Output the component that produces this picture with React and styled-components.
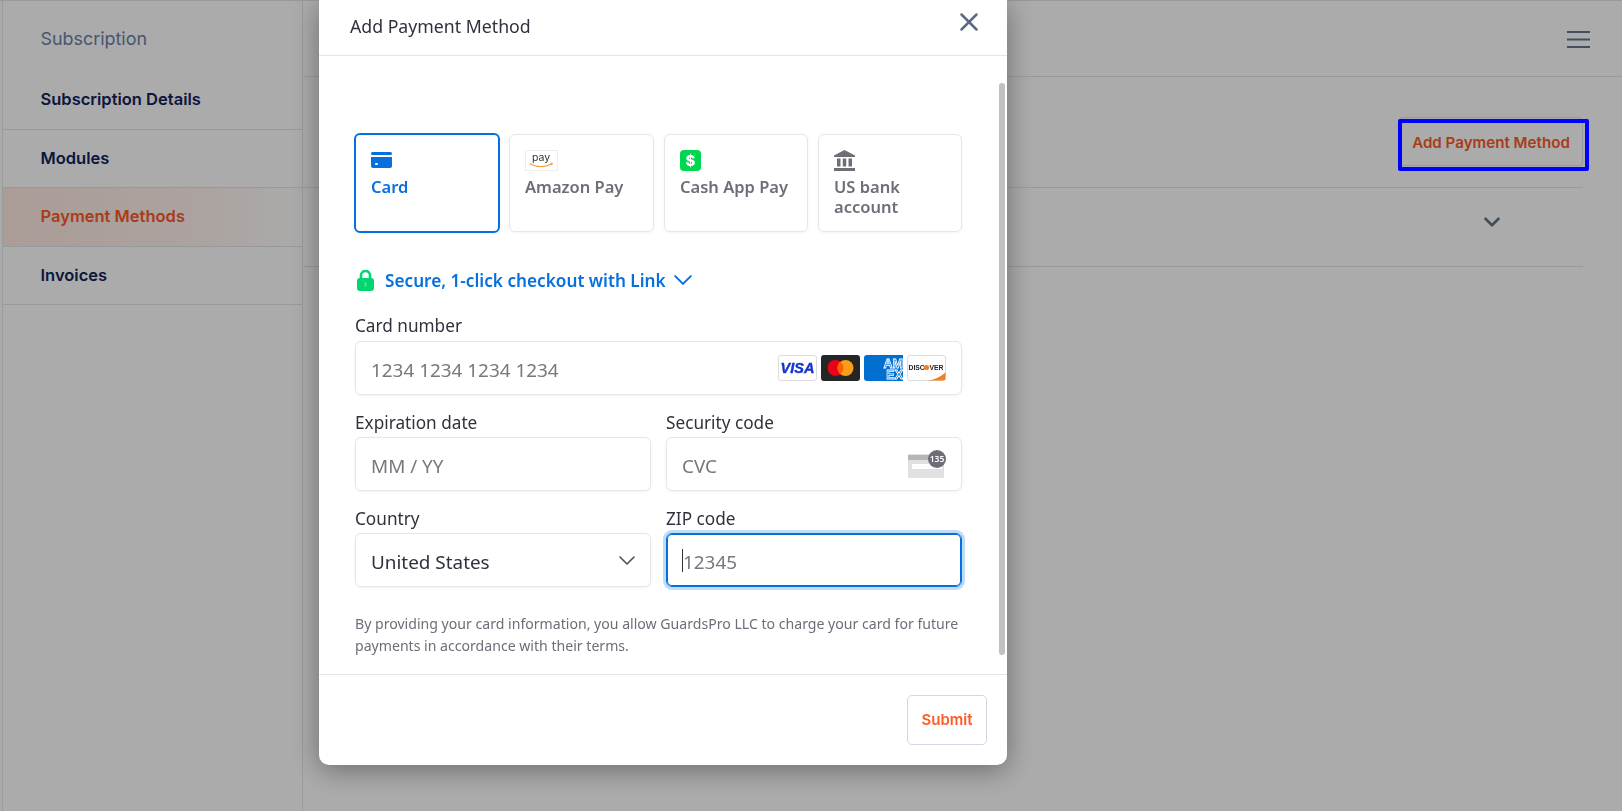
import React from 'react';
import styled, { createGlobalStyle } from 'styled-components';
import { X, ChevronDown } from 'lucide-react';

const Global = createGlobalStyle`
  html, body { margin: 0; padding: 0; height: 100%; overflow: hidden; background: #fff; }
  * { box-sizing: border-box; }
`;

const Page = styled.div`
  width: 1622px;
  height: 811px;
  display: flex;
  padding-left: 2px;
  border-top: 1px solid #dfe3ea;
  font-family: Inter, 'Liberation Sans', sans-serif;
  overflow: hidden;
`;

const Sidebar = styled.aside`
  width: 301px;
  flex-shrink: 0;
  border-left: 1px solid #e4e7ec;
  border-right: 1px solid #e4e7ec;
  display: flex;
  flex-direction: column;
`;

const SideTitle = styled.div`
  height: 69px;
  padding: 27px 0 0 37.5px;
  font-size: 17.9px;
  line-height: 22px;
  color: #6b7fa8;
`;

const SideItem = styled.div`
  height: ${(p) => p.$h}px;
  padding: 0 0 2px 37.5px;
  display: flex;
  align-items: center;
  font-size: 16.5px;
  font-weight: 600;
  border-bottom: 1px solid #e2e5ea;
  color: ${(p) => (p.$active ? '#fb5a26' : '#13235a')};
  background: ${(p) => (p.$active ? 'linear-gradient(90deg, #ffe9e1, #fff4f0 70%, #fff)' : 'transparent')};
`;

const Main = styled.main`
  flex: 1;
  display: flex;
  flex-direction: column;
`;

const TopBar = styled.div`
  height: 76px;
  flex-shrink: 0;
  border-bottom: 1px solid #e2e5ea;
  display: flex;
  justify-content: flex-end;
  align-items: flex-start;
  padding: 30px 32px 0 0;
  color: #64748b;
`;

const Content = styled.div`
  padding: 40px 39px 0 0;
  display: flex;
  flex-direction: column;
`;

const ActionRow = styled.div`
  display: flex;
  justify-content: flex-end;
  padding-bottom: 21px;
  border-bottom: 1px solid #e2e5ea;
`;

const OutlineButton = styled.button`
  width: 184px;
  height: 49px;
  padding: 1px 0 0;
  background: #fff;
  border: 1px solid #dfe3ea;
  border-radius: 4px;
  color: #fb5a26;
  font: 600 15.15px Inter, sans-serif;
`;

const AccordionRow = styled.div`
  height: 79px;
  border-bottom: 1px solid #e2e5ea;
  display: flex;
  justify-content: flex-end;
  padding: 21px 78px 0 0;
  color: #64748b;
`;

const Overlay = styled.div`
  position: fixed;
  inset: 0;
  background: rgba(0, 0, 0, 0.33);
  padding-left: 319px;
`;

// annotation drawn on top of the dimmed page, so it keeps its full colour
const Highlight = styled.div`
  position: fixed;
  left: 1398px;
  top: 119px;
  width: 191px;
  height: 52px;
  border: 4px solid #0000ff;
  border-radius: 2px;
`;

const Modal = styled.div`
  width: 688px;
  height: 765px;
  background: #fff;
  border-radius: 0 0 10px 10px;
  box-shadow: 0 5px 28px rgba(0, 0, 0, 0.38);
  display: flex;
  flex-direction: column;
  position: relative;
  font-family: 'Noto Sans', 'Open Sans', sans-serif;
`;

const ModalHeader = styled.div`
  height: 56px;
  flex-shrink: 0;
  border-bottom: 1px solid #e5e5e5;
  padding: 14px 0 0 31px;
  font-size: 17.7px;
  line-height: 24px;
  color: #30313d;
`;

const CloseBtn = styled.div`
  position: absolute;
  top: 7px;
  right: 23px;
  color: #5b6b84;
  display: flex;
`;

const ModalBody = styled.div`
  flex: 1;
  padding: 78px 45px 0 36px;
`;

const Thumb = styled.div`
  position: absolute;
  top: 83px;
  right: 2px;
  width: 6px;
  height: 572px;
  border-radius: 3px;
  background: #c1c1c1;
`;

const Tabs = styled.div`
  display: grid;
  grid-template-columns: 144px 145px 144px 144px;
  column-gap: 10px;
  align-items: start;
`;

const Tab = styled.div`
  height: ${(p) => (p.$active ? 100 : 98)}px;
  margin: ${(p) => (p.$active ? '-1px' : 0)};
  padding: 15px 0 0 15px;
  border-radius: 6px;
  border: ${(p) => (p.$active ? '2px solid #0570de' : '1px solid #e6e6e6')};
  box-shadow: 0 1px 3px rgba(0, 0, 0, 0.05);
  color: ${(p) => (p.$active ? '#0570de' : '#6d6e78')};
  font-size: 16.5px;
  font-weight: 600;
  line-height: 20px;
`;

const TabIcon = styled.div`
  height: 21px;
  margin-bottom: 6px;
  display: flex;
`;

const LinkRow = styled.div`
  display: flex;
  align-items: center;
  margin-top: 37px;
  height: 22px;
  color: #0570de;
  font-size: 17.2px;
  font-weight: 600;
  gap: 11px;
  padding-left: 2px;
`;

const LinkChevron = styled.span`
  display: flex;
  margin-left: -3px;
`;

const Label = styled.div`
  font-size: 17.2px;
  line-height: 24px;
  height: 24px;
  margin-bottom: 3px;
  padding-top: ${(p) => p.$nudge || 0}px;
  color: #30313d;
`;

const Field = styled.div`
  margin-top: ${(p) => p.$top || 0}px;
`;

const TwoCol = styled.div`
  display: grid;
  grid-template-columns: 296px 296px;
  gap: 15px;
  margin-top: 15px;
`;

const InputBox = styled.div`
  height: 54px;
  border-radius: 6px;
  border: ${(p) => (p.$focus ? '1px solid #0570de' : '1px solid #e6e6e6')};
  box-shadow: ${(p) =>
    p.$focus ? '0 0 0 3px rgba(5, 112, 222, 0.25), 0 0 0 1px #0570de inset' : '0 1px 3px rgba(0, 0, 0, 0.06)'};
  padding: 0 15px;
  display: flex;
  align-items: center;
  justify-content: space-between;
  font-size: 18.9px;
  color: ${(p) => (p.$value ? '#30313d' : '#77787f')};
`;

const InputText = styled.span`
  display: flex;
  align-items: center;
  margin-top: 4px;
`;

const Caret = styled.span`
  width: 1px;
  height: 23px;
  margin-top: -4px;
  background: #30313d;
`;

const Brands = styled.div`
  display: flex;
  gap: 4px;
`;

const Terms = styled.p`
  margin: 26px 0 0;
  font-size: 14.1px;
  line-height: 21.5px;
  white-space: nowrap;
  color: #6d6e78;
`;

const ModalFooter = styled.div`
  height: 91px;
  flex-shrink: 0;
  border-top: 1px solid #e5e5e5;
  display: flex;
  justify-content: flex-end;
  padding: 20px 20px 0 0;
`;

const SubmitBtn = styled.button`
  width: 80px;
  height: 50px;
  padding: 0 0 2px;
  background: #fff;
  border: 1px solid #cfd8e3;
  border-radius: 5px;
  color: #ff5a26;
  font: 600 15px Inter, sans-serif;
`;

const CardGlyph = () => (
  <svg width="21" height="17" viewBox="0 0 21 17" style={{ marginTop: 2 }}>
    <rect x="0" y="0" width="21" height="3" rx="1.5" fill="#0570de" />
    <path d="M0 5h21v9a2 2 0 0 1-2 2H2a2 2 0 0 1-2-2z" fill="#0570de" />
    <rect x="4" y="11" width="3" height="2" rx="1" fill="#fff" />
  </svg>
);

const AmazonGlyph = () => (
  <svg width="33" height="21" viewBox="0 0 33 21">
    <rect x="0.5" y="0.5" width="32" height="20" fill="#fff" stroke="#eee" />
    <text x="16" y="10.5" textAnchor="middle" fontFamily="Inter, sans-serif" fontSize="10.5" fontWeight="400" fill="#333">pay</text>
    <path d="M5 13.5c6 4 16 4 22 0" fill="none" stroke="#f79c34" strokeWidth="1.2" />
    <path d="M25 13l3-.2-1 2.6z" fill="#f79c34" />
  </svg>
);

const CashGlyph = () => (
  <svg width="21" height="21" viewBox="0 0 21 21">
    <rect width="21" height="21" rx="4" fill="#00d64f" />
    <text x="10.5" y="16" textAnchor="middle" fontFamily="Inter, sans-serif" fontSize="15" fontWeight="800" fill="#fff">$</text>
  </svg>
);

const BankGlyph = () => (
  <svg width="21" height="21" viewBox="0 0 21 21" fill="#6d6e78">
    <path d="M10.5 0L21 5.5V7H0V5.500z" />
    <rect x="3" y="8.500" width="3.500" height="8" />
    <rect x="8.750" y="8.500" width="3.500" height="8" />
    <rect x="14.500" y="8.500" width="3.500" height="8" />
    <rect x="0" y="18" width="21" height="3" />
  </svg>
);

const LockGlyph = () => (
  <svg width="17" height="21" viewBox="0 0 17 21">
    <path d="M4 9V5.500a4.500 4.500 0 0 1 9 0V9" fill="none" stroke="#00d66f" strokeWidth="2.6" />
    <rect y="8" width="17" height="13" rx="3" fill="#00d66f" />
    <rect x="7.500" y="12" width="2" height="5" rx="1" fill="#fff" opacity="0.3" />
  </svg>
);

const Chevron = ({ w, h, color, stroke }) => (
  <svg width={w} height={h} viewBox="0 0 16 9" fill="none" stroke={color} strokeWidth={stroke} strokeLinecap="round" strokeLinejoin="round">
    <path d="M1 1l7 7 7-7" />
  </svg>
);

const MenuGlyph = () => (
  <svg width="23" height="17" viewBox="0 0 23 17" stroke="currentColor" strokeWidth="2">
    <path d="M0 1h23M0 8.500h23M0 16h23" />
  </svg>
);

const VisaLogo = () => (
  <svg width="39" height="26" viewBox="0 0 39 26">
    <rect x="0.5" y="0.5" width="38" height="25" rx="2.500" fill="#fff" stroke="#dcdcdc" />
    <text x="19.5" y="18" textAnchor="middle" fontFamily="'Liberation Sans', sans-serif" fontStyle="italic" fontWeight="700" fontSize="14.500" fill="#1434cb" stroke="#1434cb" strokeWidth="0.4">VISA</text>
  </svg>
);

const MastercardLogo = () => (
  <svg width="39" height="26" viewBox="0 0 39 26">
    <rect width="39" height="26" rx="3" fill="#252525" />
    <circle cx="14.500" cy="13" r="8" fill="#eb001b" />
    <circle cx="24.500" cy="13" r="8" fill="#f79e1b" />
    <path d="M19.500 6.800a8 8 0 0 1 0 12.400 8 8 0 0 1 0-12.400z" fill="#ff5f00" />
  </svg>
);

const AmexLogo = () => (
  <svg width="39" height="26" viewBox="0 0 39 26">
    <path d="M3 0h36v26H3a3 3 0 0 1-3-3V3a3 3 0 0 1 3-3z" fill="#016fd0" />
    <text x="39" y="12.500" textAnchor="end" fontFamily="'Liberation Sans', sans-serif" fontWeight="700" fontSize="12.500" fill="#016fd0" stroke="#fff" strokeWidth="0.8">AM</text>
    <text x="39" y="23.500" textAnchor="end" fontFamily="'Liberation Sans', sans-serif" fontWeight="700" fontSize="12.500" fill="#016fd0" stroke="#fff" strokeWidth="0.8">EX</text>
  </svg>
);

const DiscoverLogo = () => (
  <svg width="39" height="26" viewBox="0 0 39 26">
    <rect x="0.5" y="0.5" width="38" height="25" rx="2.500" fill="#fff" stroke="#dcdcdc" />
    <path d="M21 25.500c7-1 13-4 17.500-8v6a2 2 0 0 1-2 2z" fill="#f48120" />
    <circle cx="19.500" cy="12.500" r="2.600" fill="#f48120" />
    <text x="1.500" y="15" fontFamily="'Liberation Sans', sans-serif" fontWeight="700" fontSize="6.800" fill="#222">DISC</text>
    <text x="22.500" y="15" fontFamily="'Liberation Sans', sans-serif" fontWeight="700" fontSize="6.800" fill="#222">VER</text>
  </svg>
);

const CvcLogo = () => (
  <svg width="38" height="28" viewBox="0 0 38 28">
    <rect x="0" y="4" width="36" height="24" rx="1" fill="#e1e1e3" />
    <rect x="0" y="5" width="36" height="5" fill="#b6b6b9" />
    <rect x="4" y="14" width="30" height="5" fill="#fff" />
    <circle cx="29" cy="9" r="9" fill="#6d6e78" />
    <text x="29" y="12" textAnchor="middle" fontFamily="'Noto Sans', sans-serif" fontWeight="600" fontSize="8.500" fill="#fff">135</text>
  </svg>
);

export default function App() {
  return (
    <>
      <Global />
      <Page>
        <Sidebar>
          <SideTitle>Subscription</SideTitle>
          <SideItem $h={60}>Subscription Details</SideItem>
          <SideItem $h={58}>Modules</SideItem>
          <SideItem $h={59} $active>Payment Methods</SideItem>
          <SideItem $h={58}>Invoices</SideItem>
        </Sidebar>
        <Main>
          <TopBar>
            <MenuGlyph />
          </TopBar>
          <Content>
            <ActionRow>
              <OutlineButton>Add Payment Method</OutlineButton>
            </ActionRow>
            <AccordionRow>
              <ChevronDown size={26} strokeWidth={2.400} />
            </AccordionRow>
          </Content>
        </Main>
      </Page>
      <Overlay>
        <Modal>
          <ModalHeader>Add Payment Method</ModalHeader>
          <CloseBtn>
            <X size={30} strokeWidth={2} />
          </CloseBtn>
          <Thumb />
          <ModalBody>
            <Tabs>
              <Tab $active>
                <TabIcon><CardGlyph /></TabIcon>
                Card
              </Tab>
              <Tab>
                <TabIcon><AmazonGlyph /></TabIcon>
                Amazon Pay
              </Tab>
              <Tab>
                <TabIcon><CashGlyph /></TabIcon>
                Cash App Pay
              </Tab>
              <Tab>
                <TabIcon><BankGlyph /></TabIcon>
                US bank
                <br />
                account
              </Tab>
            </Tabs>
            <LinkRow>
              <LockGlyph />
              Secure, 1-click checkout with Link
              <LinkChevron>
                <Chevron w={18} h={10} color="#0570de" stroke={1.800} />
              </LinkChevron>
            </LinkRow>
            <Field $top={23}>
              <Label>Card number</Label>
              <InputBox>
                <InputText>1234 1234 1234 1234</InputText>
                <Brands>
                  <VisaLogo />
                  <MastercardLogo />
                  <AmexLogo />
                  <DiscoverLogo />
                </Brands>
              </InputBox>
            </Field>
            <TwoCol>
              <div>
                <Label $nudge={1}>Expiration date</Label>
                <InputBox>
                  <InputText>MM / YY</InputText>
                </InputBox>
              </div>
              <div>
                <Label $nudge={1}>Security code</Label>
                <InputBox>
                  <InputText>CVC</InputText>
                  <CvcLogo />
                </InputBox>
              </div>
            </TwoCol>
            <TwoCol>
              <div>
                <Label $nudge={1}>Country</Label>
                <InputBox $value>
                  <InputText>United States</InputText>
                  <Chevron w={16} h={9} color="#4f5058" stroke={1.600} />
                </InputBox>
              </div>
              <div>
                <Label $nudge={1}>ZIP code</Label>
                <InputBox $focus>
                  <InputText><Caret />12345</InputText>
                </InputBox>
              </div>
            </TwoCol>
            <Terms>
              By providing your card information, you allow GuardsPro LLC to charge your card for future
              <br />
              payments in accordance with their terms.
            </Terms>
          </ModalBody>
          <ModalFooter>
            <SubmitBtn>Submit</SubmitBtn>
          </ModalFooter>
        </Modal>
      </Overlay>
      <Highlight />
    </>
  );
}
